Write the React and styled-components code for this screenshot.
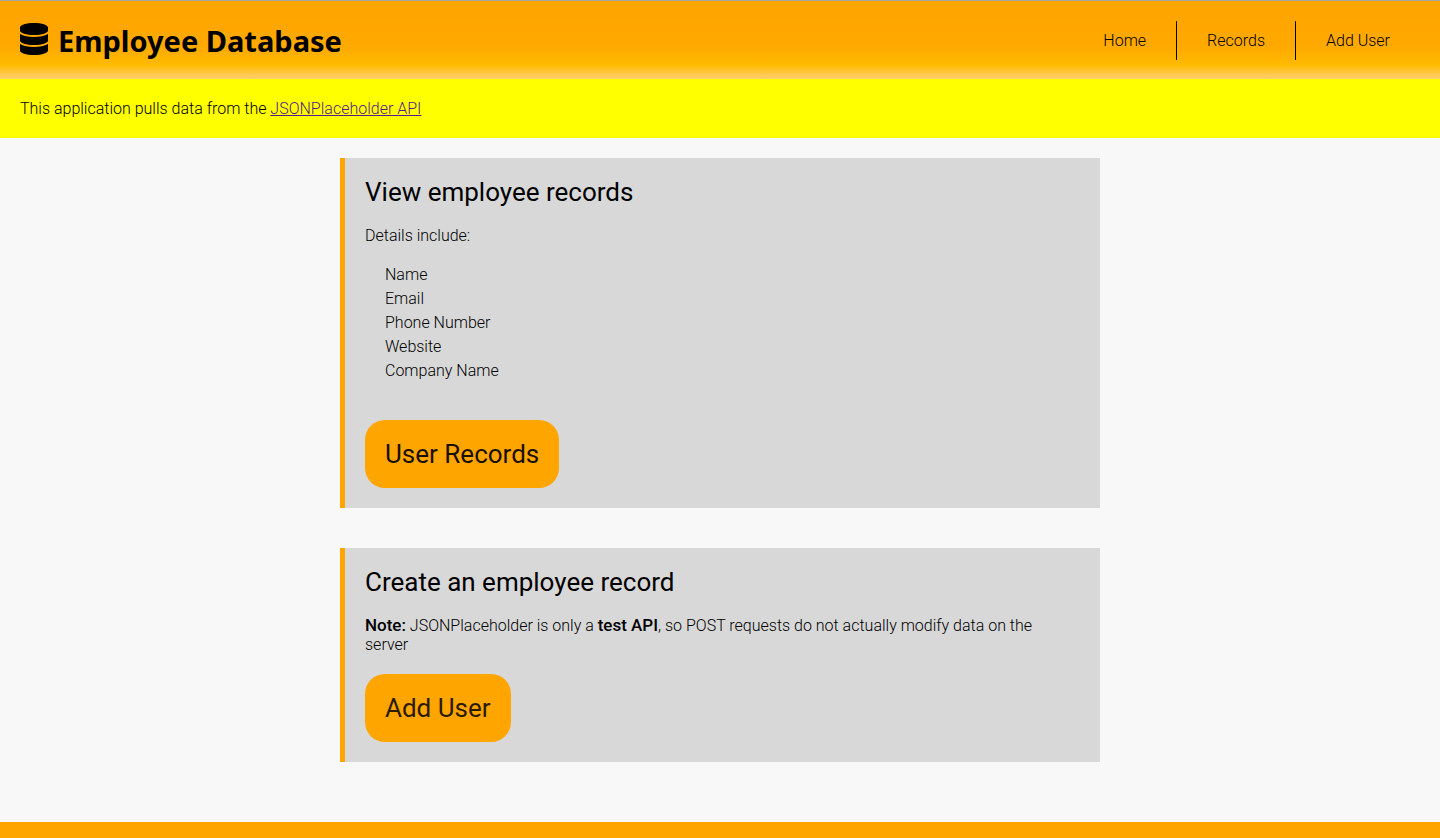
import React from "react";
import styled, { createGlobalStyle } from "styled-components";
import { FaDatabase } from "react-icons/fa";

const GlobalStyle = createGlobalStyle`
  * { box-sizing: border-box; margin: 0; padding: 0; }
  body {
    background: #f8f8f8;
    color: #000;
    font-family: Roboto, "Liberation Sans", sans-serif;
    font-size: 16px;
    font-weight: 300;
    line-height: 19px;
  }
`;

const Page = styled.div`
  display: flex;
  flex-direction: column;
  min-height: 100vh;
`;

const Header = styled.header`
  display: flex;
  align-items: center;
  justify-content: space-between;
  padding: 20px 20px 19px;
  border-top: 1px solid #a6a6a6;
  background: linear-gradient(to bottom, #ffa500 0%, #ffa500 20%, #ffaa00 60%, #ffbb00 82%, #ffcc66 98%);
`;

const Brand = styled.h1`
  display: flex;
  align-items: center;
  gap: 10px;
  font-family: "Noto Sans", "Open Sans", sans-serif;
  font-size: 29px;
  font-weight: 700;
  line-height: 36px;
`;

const BrandIcon = styled(FaDatabase)`
  width: 28px;
  height: 32px;
  margin-bottom: 4px;
`;

const NavList = styled.ul`
  display: flex;
  list-style: none;
`;

const NavItem = styled.li`
  & + & {
    border-left: 1px solid #000;
  }
`;

const NavLink = styled.a`
  display: block;
  padding: 10px 30px;
  color: #000;
  text-decoration: none;
`;

const Notice = styled.p`
  padding: 20px;
  background: #ffff00;
`;

const NoticeLink = styled.a`
  color: #551a8b;
`;

const Main = styled.main`
  display: flex;
  flex-direction: column;
  gap: 40px;
  width: 100%;
  max-width: 800px;
  margin: 0 auto;
  padding: 20px 20px 60px;
`;

const Card = styled.section`
  display: flex;
  flex-direction: column;
  align-items: flex-start;
  gap: 20px;
  padding: 20px;
  border-left: 5px solid #ffa500;
  background: #d8d8d8;
`;

const CardTitle = styled.h2`
  font-size: 26px;
  font-weight: 400;
  line-height: 28px;
`;

const CardText = styled.p`
  padding-right: 20px;
`;

const DetailList = styled.ul`
  display: flex;
  flex-direction: column;
  gap: 5px;
  padding: 0 20px 20px;
  list-style: none;
`;

const Strong = styled.strong`
  font-size: 17px;
  font-weight: 500;
`;

const CardButton = styled.button`
  padding: 20px;
  border: 0;
  border-radius: 20px;
  background: #ffa500;
  color: ${(p) => p.$tone || "#1a1000"};
  font: inherit;
  font-size: 26px;
  font-weight: 400;
  line-height: 28px;
  cursor: pointer;
`;

const Footer = styled.footer`
  flex: 1;
  min-height: 16px;
  background: #ffa500;
`;

const navLinks = ["Home", "Records", "Add User"];
const details = ["Name", "Email", "Phone Number", "Website", "Company Name"];

export default function App() {
  return (
    <Page>
      <GlobalStyle />
      <Header>
        <Brand>
          <BrandIcon aria-hidden="true" />
          Employee Database
        </Brand>
        <nav>
          <NavList>
            {navLinks.map((label) => (
              <NavItem key={label}>
                <NavLink href="#">{label}</NavLink>
              </NavItem>
            ))}
          </NavList>
        </nav>
      </Header>
      <Notice>
        This application pulls data from the <NoticeLink href="#">JSONPlaceholder API</NoticeLink>
      </Notice>
      <Main>
        <Card>
          <CardTitle>View employee records</CardTitle>
          <CardText>Details include:</CardText>
          <DetailList>
            {details.map((label) => (
              <li key={label}>{label}</li>
            ))}
          </DetailList>
          <CardButton type="button">User Records</CardButton>
        </Card>
        <Card>
          <CardTitle>Create an employee record</CardTitle>
          <CardText>
            <Strong>Note:</Strong> JSONPlaceholder is only a <Strong>test API</Strong>, so POST requests do not
            actually modify data on the server
          </CardText>
          <CardButton type="button" $tone="#2b1c00">Add User</CardButton>
        </Card>
      </Main>
      <Footer />
    </Page>
  );
}
